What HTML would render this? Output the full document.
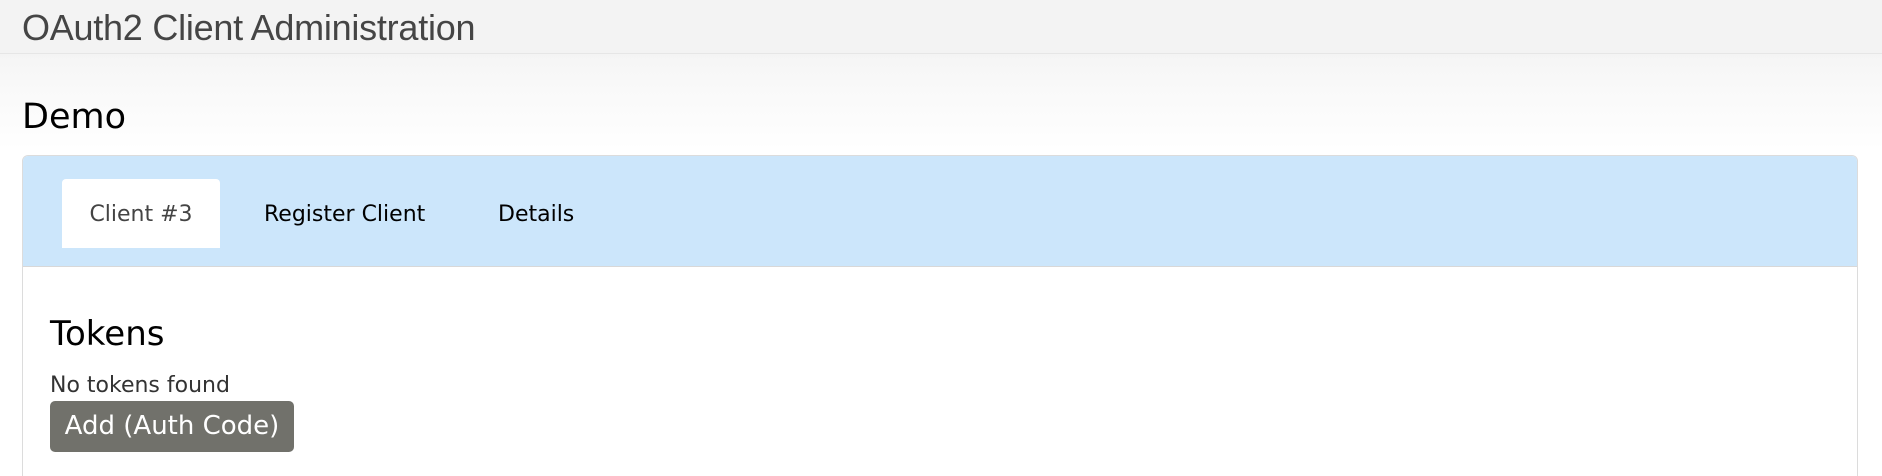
<!DOCTYPE html>
<html><head><meta charset="utf-8"><style>
html,body{margin:0;padding:0;width:1882px;height:476px;overflow:hidden;background:#fff;}
body{background:linear-gradient(#f3f3f3 0,#f3f3f3 53px,#f6f6f6 60px,#fff 150px);font-family:"DejaVu Sans",sans-serif;position:relative;}
.hdr{position:absolute;left:0;top:0;width:1882px;height:53px;border-bottom:1px solid #e6e6e6;}
.title{position:absolute;left:22px;top:7px;font-family:"Liberation Sans",sans-serif;font-size:36px;color:#454545;white-space:nowrap;letter-spacing:-0.25px;}
.demo{position:absolute;left:22px;top:97px;font-size:35px;color:#000;}
.panel{position:absolute;left:22px;top:155px;width:1834px;height:340px;border:1px solid #dcdcdc;border-radius:6px;background:#fff;overflow:hidden;}
.bar{height:110px;background:#cce6fb;border-bottom:1px solid #d8d8d8;position:relative;}
.tab{position:absolute;top:23px;height:69px;font-size:22px;line-height:71px;color:#000;white-space:nowrap;}
.t1{left:39px;width:158px;background:#fff;border-radius:4px 4px 0 0;text-align:center;color:#444;}
.tokens{position:absolute;left:27px;top:158px;font-size:34px;color:#000;}
.none{position:absolute;left:27px;top:217px;font-size:22px;color:#333;}
.btn{position:absolute;left:27px;top:245px;width:244px;height:51px;background:#71716b;border-radius:5px;color:#fff;font-size:26px;line-height:51px;text-align:center;}
</style></head><body>
<div class="hdr"><div class="title">OAuth2 Client Administration</div></div>
<div class="demo">Demo</div>
<div class="panel">
<div class="bar">
<div class="tab t1">Client #3</div>
<div class="tab" style="left:241px">Register Client</div>
<div class="tab" style="left:475px">Details</div>
</div>
<div class="tokens">Tokens</div>
<div class="none">No tokens found</div>
<div class="btn">Add (Auth Code)</div>
</div>
</body></html>
